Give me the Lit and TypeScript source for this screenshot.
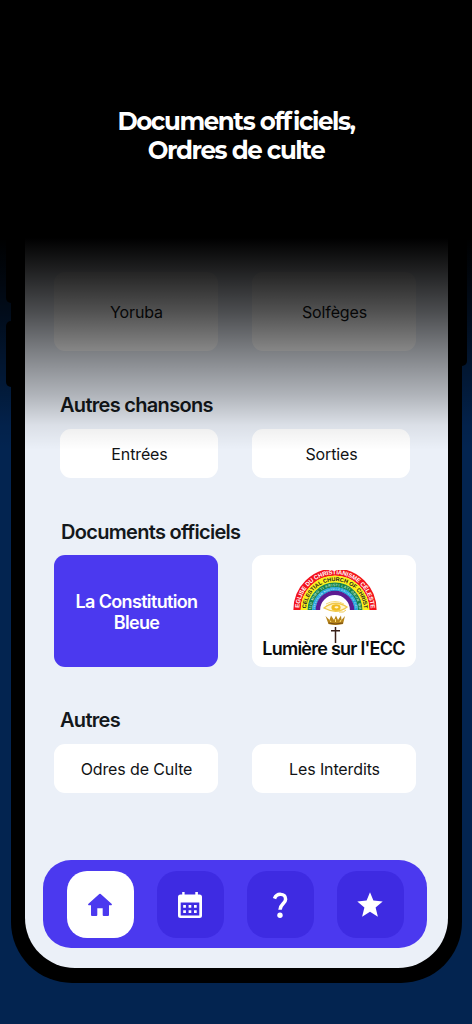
import { LitElement, css, html, svg } from "lit";
import { customElement, property } from "lit/decorators.js";

@customElement("church-logo")
export class ChurchLogo extends LitElement {
  static styles = css`
    :host {
      display: block;
      width: 84px;
      height: 73px;
    }

    svg {
      display: block;
    }

    text {
      font-family: "Liberation Sans", Arial, sans-serif;
      font-weight: bold;
    }

    .red-text {
      font-size: 6px;
      fill: #fff;
    }

    .yellow-text {
      font-size: 5.6px;
      fill: #222;
    }

    .green-text {
      font-size: 3.6px;
      fill: #b9dfc0;
    }

    .blue-text {
      font-size: 2.4px;
      fill: #c3e8f8;
    }
  `;

  band(outer: number, inner: number, color: string) {
    const middle = (outer + inner) / 2;
    return svg`<path d="M${42 - middle} 40A${middle} ${middle} 0 0 1 ${42 + middle} 40"
      fill="none" stroke=${color} stroke-width=${outer - inner + 0.2} />`;
  }

  arc(id: string, radius: number) {
    return svg`<path id=${id} fill="none" d="M${42 - radius} 40A${radius} ${radius} 0 0 1 ${42 + radius} 40" />`;
  }

  render() {
    return html`
      <svg width="84" height="73" viewBox="0 0 84 73">
        <defs>
          ${this.arc("a1", 35.8)} ${this.arc("a2", 28.9)} ${this.arc("a3", 23.8)} ${this.arc("a4", 20.2)}
        </defs>
        ${this.band(41.5, 34.3, "#f3131d")}
        ${this.band(34.3, 27.3, "#fbf01c")}
        ${this.band(27.3, 22.8, "#14824a")}
        ${this.band(22.8, 19.2, "#20a0d8")}
        ${this.band(19.2, 15, "#5c1c91")}
        <text class="red-text" textLength="108"><textPath href="#a1" startOffset="2">EGLISE DU CHRISTIANISME CÉLESTE</textPath></text>
        <text class="yellow-text" textLength="87"><textPath href="#a2" startOffset="1.5">CELESTIAL CHURCH OF CHRIST</textPath></text>
        <text class="green-text" textLength="72"><textPath href="#a3" startOffset="1">IJO MIMO TI KRISTI LATI ORUN WA</textPath></text>
        <text class="blue-text" textLength="60"><textPath href="#a4" startOffset="1">JERUSALEM NOUVELLE EGLISE DU CIEL</textPath></text>
        <path d="M31 37Q42 29 55 37L55 43H31Z" fill="#fff" />
        <path d="M31 38Q42 29 54 37Q44 45 31 38Z" fill="#fff6d2" stroke="#f1c94a" stroke-width="1.3" />
        <path d="M33 34Q42 29 51 34" fill="none" stroke="#f6d976" stroke-width="1" />
        <ellipse cx="43" cy="37.5" rx="4.6" ry="3.3" fill="#f0bb20" />
        <ellipse cx="43.5" cy="37.3" rx="2" ry="1.1" fill="#fff5cd" />
        <path d="M46 42Q51 43 53 40" fill="none" stroke="#efc84e" />
        <path d="M32.5 46L36.5 50L38 45.5L41 50L43 45.5L45 50L48 45.5L48.5 50L52 46L50 54Q42 56 35.5 54Z" fill="#b78418" />
        <path d="M35.5 53Q42 55 50 53" fill="none" stroke="#714815" />
        <path d="M37 50.5L38 52M42.5 49V52M48 50L47 52" stroke="#ffe078" />
        <path d="M42.5 57V73M38 60.7H47" fill="none" stroke="#392018" stroke-width="1.5" />
      </svg>
    `;
  }
}

@customElement("doc-card")
export class DocCard extends LitElement {
  static styles = css`
    :host {
      display: flex;
      align-items: center;
      justify-content: center;
      box-sizing: border-box;
      padding: 2px 0 0 1px;
      border-radius: 11px;
      background-color: #fff;
      color: #111315;
      font: 400 16px/21px Inter, sans-serif;
      letter-spacing: -0.12px;
      text-align: center;
    }

    :host([kind="primary"]) {
      background-color: #4b39ef;
      color: #fff;
      font-size: 18px;
      font-weight: 600;
      letter-spacing: -0.65px;
    }

    :host([kind="logo"]) {
      flex-direction: column;
      justify-content: flex-start;
      padding: 15px 1px 0 0;
      color: #090b0d;
      font-size: 18px;
      font-weight: 600;
      letter-spacing: -0.75px;
    }

    .label {
      white-space: pre-line;
    }

    church-logo {
      margin-left: 2px;
    }

    :host([kind="logo"]) .label {
      margin-top: -5px;
    }
  `;

  @property({ reflect: true })
  kind = "plain";

  @property()
  label = "";

  render() {
    return html`
      ${this.kind === "logo" ? html`<church-logo></church-logo>` : ""}
      <span class="label">${this.label}</span>
    `;
  }
}

@customElement("nav-bar")
export class NavBar extends LitElement {
  static styles = css`
    :host {
      display: flex;
      gap: 23px;
      box-sizing: border-box;
      width: 384px;
      height: 88px;
      padding: 11px 23.5px;
      border-radius: 28px;
      background-color: #4b39ef;
    }

    .item {
      display: grid;
      place-items: center;
      width: 67px;
      height: 67px;
      border-radius: 20px;
      background-color: #3e2be2;
      color: #fff;
    }

    .active {
      background-color: #fff;
      color: #4b39ef;
    }

    svg {
      display: block;
      fill: currentColor;
    }
  `;

  render() {
    return html`
      <div class="item active">
        <svg width="28" height="28" viewBox="0 0 28 28">
          <path d="M13.3 3Q14 2.4 14.7 3L25.8 13Q26.3 14.2 25.2 14.3H23V24Q23 25 22 25H17.7Q16.7 25 16.7 24V17.3H11.3V24Q11.3 25 10.3 25H6Q5 25 5 24V14.3H2.8Q1.7 14.2 2.2 13Z" />
        </svg>
      </div>
      <div class="item">
        <svg width="28" height="28" viewBox="0 0 28 28">
          <path fill-rule="evenodd" d="M6.2 1H8.6V3.4H19.3V1H21.9V3.4H23.5Q26 3.4 26 5.9V24.5Q26 27 23.5 27H4.5Q2 27 2 24.5V5.9Q2 3.4 4.5 3.4H6.2ZM4.7 11.4V24.4H23.3V11.4Z" />
          <path d="M7.2 14H9.9V16.7H7.2ZM12.6 14H15.3V16.7H12.6ZM18 14H20.7V16.7H18ZM7.2 19.2H9.9V21.9H7.2ZM12.6 19.2H15.3V21.9H12.6ZM18 19.2H20.7V21.9H18Z" />
        </svg>
      </div>
      <div class="item">
        <svg width="28" height="28" viewBox="0 0 28 28">
          <path d="M8.5 7.7C10.6 1.7 19.6 2 19.6 8.2C19.6 12.6 14 13.3 14 18.8" fill="none" stroke="currentColor" stroke-width="3.5" />
          <circle cx="14" cy="24.2" r="2.7" />
        </svg>
      </div>
      <div class="item">
        <svg width="28" height="28" viewBox="0 0 28 28">
          <path d="M14 1.3L17.4 9.6L26.7 10.4L19.6 16.4L21.9 25.7L14 20.8L6.1 25.7L8.4 16.4L1.3 10.4L10.6 9.6Z" />
        </svg>
      </div>
    `;
  }
}

@customElement("app-root")
export class AppRoot extends LitElement {
  static styles = css`
    :host {
      display: grid;
      width: 472px;
      height: 1024px;
      overflow: hidden;
      background-color: #032450;
    }

    .device,
    .buttons,
    .fade {
      grid-area: 1 / 1;
    }

    .device {
      box-sizing: border-box;
      width: 451px;
      height: 983px;
      margin-left: 11px;
      padding: 0 14px 15px;
      border-radius: 0 0 61px 61px;
      background-color: #000;
    }

    .screen {
      box-sizing: border-box;
      height: 968px;
      padding: 272px 0 0 29px;
      border-radius: 0 0 50px 50px;
      background-color: #ebf0f8;
    }

    .buttons {
      display: grid;
      grid-template-columns: 6px 6px;
      justify-content: space-between;
      padding: 200px 5px 0 6px;
    }

    .side {
      display: grid;
      grid-template-rows: 103px 66px;
      gap: 18px;
    }

    .key {
      background-color: #000;
      border-radius: 5px 0 0 5px;
    }

    .power {
      height: 166px;
      border-radius: 0 0 5px 0;
    }

    .row {
      display: grid;
      grid-template-columns: 164px 164px;
      column-gap: 34px;
    }

    .tall {
      height: 79px;
    }

    .tall doc-card {
      padding-top: 1px;
    }

    .short {
      height: 49px;
    }

    .narrow {
      grid-template-columns: 158px 158px;
      margin-left: 6px;
    }

    .docs {
      height: 112px;
    }

    h2 {
      margin: 0 0 0 6px;
      color: #14181b;
      font: 600 20px/24px Inter, sans-serif;
      letter-spacing: -0.7px;
    }

    .songs-title {
      padding: 42px 0 12px;
    }

    .docs-title {
      padding: 42px 0 11px 1px;
    }

    .other-title {
      padding: 41px 0 12px;
    }

    nav-bar {
      margin: 67px 0 0 -11px;
    }

    .fade {
      z-index: 1;
      box-sizing: border-box;
      height: 452px;
      padding-top: 107px;
      background: linear-gradient(#000 238px, rgba(0, 0, 0, 0.86) 272px, rgba(0, 0, 0, 0.68) 312px, rgba(0, 0, 0, 0.48) 350px, rgba(0, 0, 0, 0.25) 395px, rgba(0, 0, 0, 0.07) 425px, transparent 450px);
    }

    h1 {
      margin: 0;
      color: #fff;
      font: 700 24.5px/28.5px Montserrat, Inter, sans-serif;
      letter-spacing: -1.4px;
      text-align: center;
    }

    .loose {
      letter-spacing: 1px;
    }
  `;

  render() {
    return html`
      <div class="buttons">
        <div class="side">
          <div class="key"></div>
          <div class="key"></div>
        </div>
        <div class="key power"></div>
      </div>
      <div class="device">
        <main class="screen">
          <div class="row tall">
            <doc-card label="Yoruba"></doc-card>
            <doc-card label="Solfèges"></doc-card>
          </div>
          <h2 class="songs-title">Autres chansons</h2>
          <div class="row short narrow">
            <doc-card label="Entrées"></doc-card>
            <doc-card label="Sorties"></doc-card>
          </div>
          <h2 class="docs-title">Documents officiels</h2>
          <div class="row docs">
            <doc-card kind="primary" label=${"La Constitution\nBleue"}></doc-card>
            <doc-card kind="logo" label="Lumière sur l'ECC"></doc-card>
          </div>
          <h2 class="other-title">Autres</h2>
          <div class="row short">
            <doc-card label="Odres de Culte"></doc-card>
            <doc-card label="Les Interdits"></doc-card>
          </div>
          <nav-bar></nav-bar>
        </main>
      </div>
      <header class="fade">
        <h1>Documents of<span class="loose">f</span>iciels,<br />Ordres de culte</h1>
      </header>
    `;
  }
}

declare global {
  interface HTMLElementTagNameMap {
    "church-logo": ChurchLogo;
    "doc-card": DocCard;
    "nav-bar": NavBar;
    "app-root": AppRoot;
  }
}
